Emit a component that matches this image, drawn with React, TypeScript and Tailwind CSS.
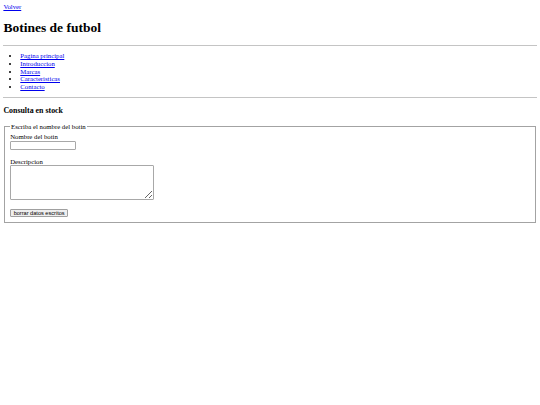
import React from 'react';

/**
 * Plain "Botines de futbol" page, drawn at the scale of the reference shot
 */
export default function App() {
  const links = ['Pagina principal', 'Introduccion', 'Marcas', 'Caracteristicas', 'Contacto'];

  return (
    <div className="flex min-h-[405px] flex-col bg-white p-[3.375px] font-['Liberation_Serif',serif] text-black">
      {/* Back link */}
      <a href="#" className="self-start text-[6.75px] leading-[7.6px] text-[#0000ee] underline">
        Volver
      </a>

      {/* Title */}
      <h1 className="mt-[9.05px] text-[13.5px] font-bold leading-[15.6px]">Botines de futbol</h1>
      <hr className="mt-[9.05px] border-t border-[#c4c4c4]" />

      {/* Nav */}
      <ul className="mt-[6.75px] list-disc pl-[16.9px] text-[6.75px] leading-[7.6px]">
        {links.map(l => (
          <li key={l}>
            <a href="#" className="text-[#0000ee] underline">{l}</a>
          </li>
        ))}
      </ul>
      <hr className="mt-[6.75px] border-t border-[#c4c4c4]" />

      {/* Stock form */}
      <h3 className="mt-[7.9px] text-[7.9px] font-bold leading-[9.07px]">Consulta en stock</h3>
      <form className="mt-[7.9px]">
        <fieldset className="mx-[0.84px] border border-[#a3a3a3] px-[5.06px] pt-[2.36px] pb-[4.2px]">
          <legend className="px-[0.84px] text-[6.75px] leading-[7.6px]">Escriba el nombre del botin</legend>
          <div className="flex flex-col items-start text-[6.75px] leading-[7.6px]">
            <label htmlFor="nombre">Nombre del botin</label>
            <input
              id="nombre"
              type="text"
              className="mt-[0.4px] h-[8.9px] w-[66px] rounded-[1px] border border-[#a8a8a8] bg-white"
            />
            <label htmlFor="desc" className="mt-[7.8px]">Descripcion</label>
            <textarea
              id="desc"
              className="h-[34.5px] w-[143.5px] rounded-[1px] border border-[#a8a8a8] bg-white"
            />
            <button
              type="reset"
              className="mt-[9.2px] h-[8.6px] rounded-[1px] border border-[#a0a0a0] bg-[#efefef] px-[2.4px] font-['Liberation_Sans',sans-serif] text-[5.6px] leading-[6px]"
            >
              borrar datos escritos
            </button>
          </div>
        </fieldset>
      </form>
    </div>
  );
}
